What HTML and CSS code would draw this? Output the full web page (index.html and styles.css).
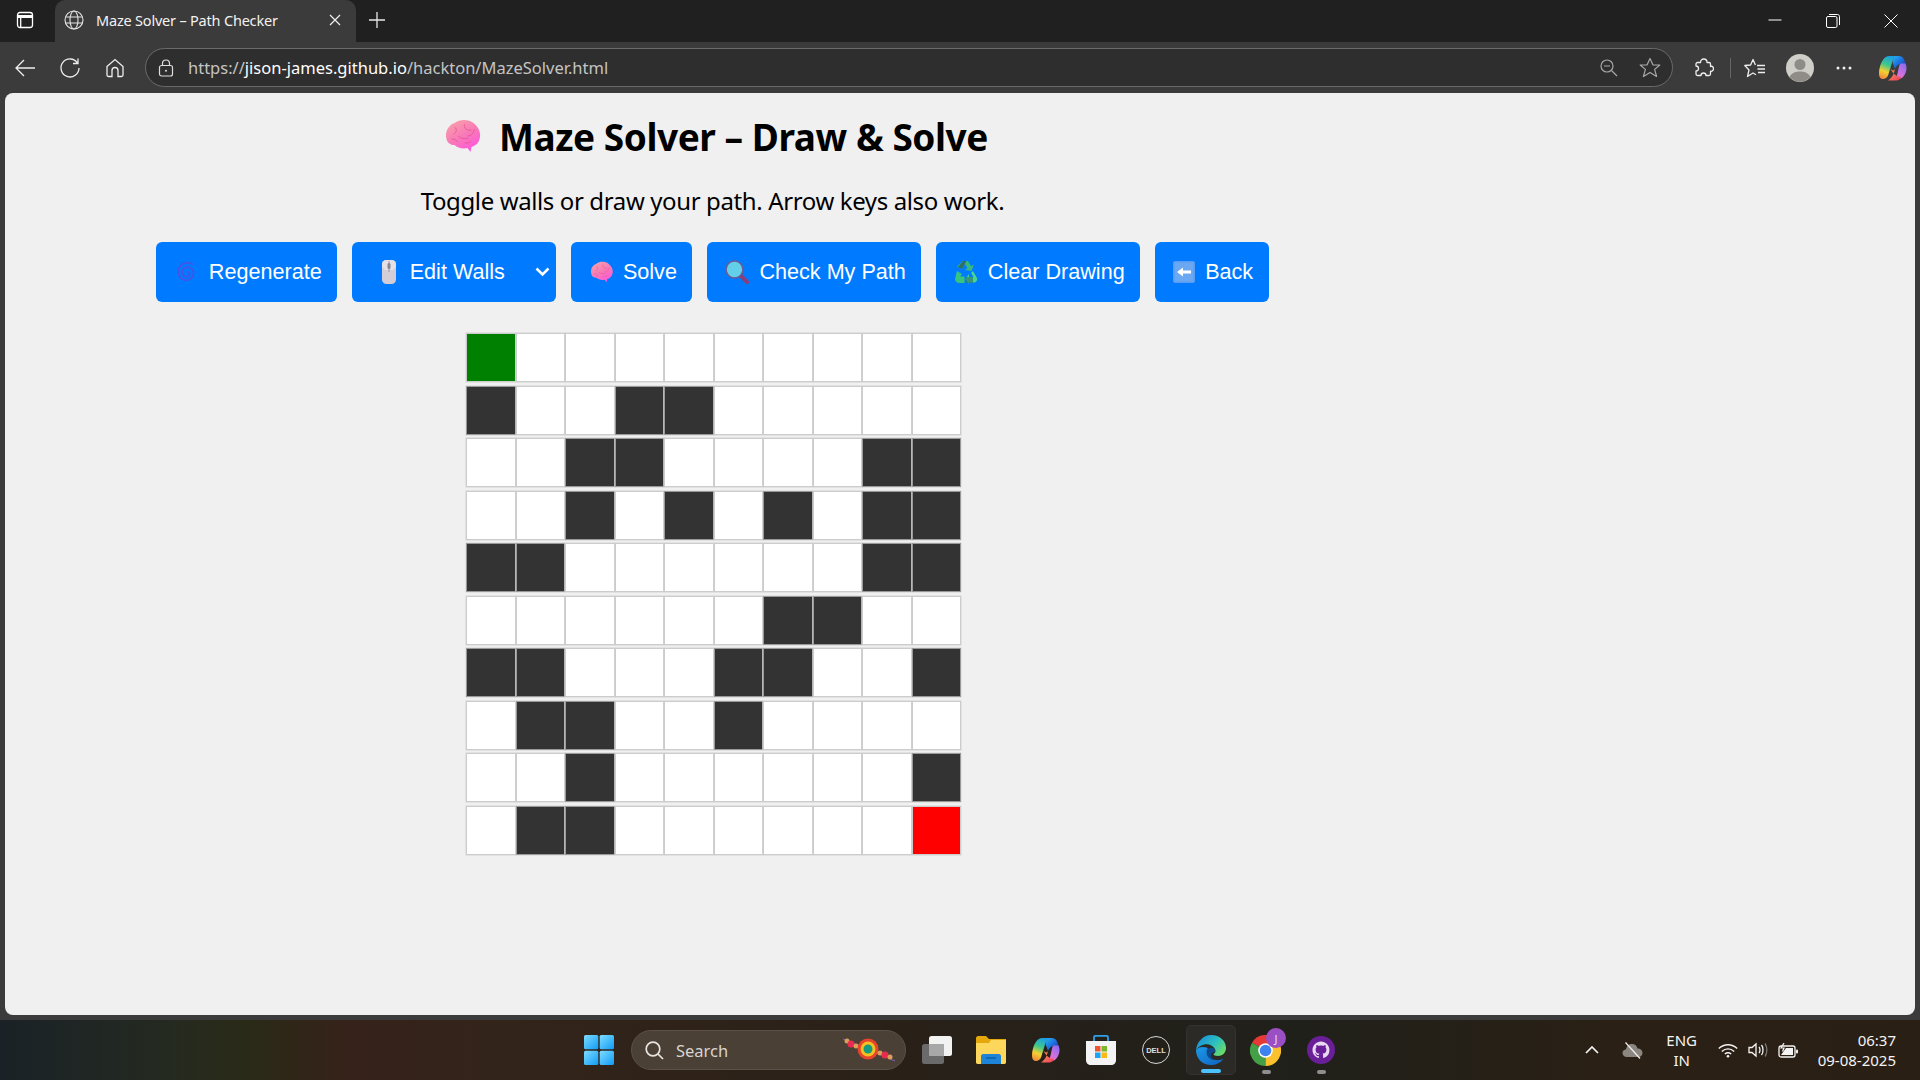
FILE: index.html
```html
<!DOCTYPE html>
<html lang="en">
<head>
    <meta charset="UTF-8">
    <meta name="viewport" content="width=device-width, initial-scale=1.0">
    <title>Maze Solver – Path Checker</title>
    <link rel="stylesheet" href="styles.css">
</head>
<body>
    <svg class="defs" width="0" height="0">
        <defs>
            <linearGradient id="brainFill" x1="0.1" y1="0" x2="0.7" y2="1">
                <stop offset="0" stop-color="#f9a3a8"/>
                <stop offset="0.55" stop-color="#f878b8"/>
                <stop offset="1" stop-color="#ff58dc"/>
            </linearGradient>
            <linearGradient id="copilotA" x1="0" y1="0" x2="1" y2="1">
                <stop offset="0" stop-color="#2bb5ef"/>
                <stop offset="0.5" stop-color="#1b6fe0"/>
                <stop offset="1" stop-color="#2a2aa0"/>
            </linearGradient>
            <linearGradient id="copilotB" x1="0.6" y1="0" x2="0.3" y2="1">
                <stop offset="0" stop-color="#1c9fe8"/>
                <stop offset="0.4" stop-color="#3fc88a"/>
                <stop offset="0.7" stop-color="#f4d030"/>
                <stop offset="1" stop-color="#f08a3c"/>
            </linearGradient>
            <linearGradient id="copilotC" x1="0.8" y1="0" x2="0.2" y2="1">
                <stop offset="0" stop-color="#8a6cf0"/>
                <stop offset="0.6" stop-color="#d070e0"/>
                <stop offset="1" stop-color="#f070b0"/>
            </linearGradient>
            <linearGradient id="copilotD" x1="0" y1="0" x2="1" y2="1">
                <stop offset="0" stop-color="#f8a050"/>
                <stop offset="1" stop-color="#f03c60"/>
            </linearGradient>
            <linearGradient id="edgeA" x1="0" y1="0.2" x2="1" y2="0.8">
                <stop offset="0" stop-color="#1a8fd8"/>
                <stop offset="0.55" stop-color="#2cc0c0"/>
                <stop offset="1" stop-color="#74e05c"/>
            </linearGradient>
            <linearGradient id="edgeB" x1="0" y1="0" x2="1" y2="1">
                <stop offset="0" stop-color="#1c9ae8"/>
                <stop offset="1" stop-color="#0f62c0"/>
            </linearGradient>
            <linearGradient id="winFill" x1="0" y1="0" x2="1" y2="1">
                <stop offset="0" stop-color="#7fdcff"/>
                <stop offset="1" stop-color="#0f9bf5"/>
            </linearGradient>
            <symbol id="brain" viewBox="0 0 36 34">
                <path d="M2 20C0 13 4 6 10 4 15 0 24 0 29 4 34 8 37 14 35 20 34 25 30 27 27 28L26 33 23 29C18 30 13 29 10 26 6 26 3 24 2 20Z" fill="url(#brainFill)"/>
                <path d="M10 8C13 10 12 14 9 15M20 5C19 9 22 12 27 11M30 10C29 14 27 17 23 17M14 17C16 20 21 20 24 19M7 20C10 20 12 21 13 23M27 22C25 24 22 24 20 24" fill="none" stroke="#e0578f" stroke-width="0.8"/>
            </symbol>
            <symbol id="copilot" viewBox="0 0 28 28">
                <path d="M16 2H20C23 2 25 4 26 8L26.500 10H22C19 10 17 12 16 15L13.500 8C14 4.500 15 2 16 2Z" fill="url(#copilotA)"/>
                <path d="M10 2H18C15.500 2 14.500 4 13.500 7L9.500 20C9 22.500 7 25 4 25C1.500 25 0 23 0 20C0 14 2 8 5 4.500C6.500 3 8 2 10 2Z" fill="url(#copilotB)"/>
                <path d="M22 9.500H26.500C28.500 14 27.500 19 24 23C22.500 24.500 21 25 19 25L15 25C17 24 18 22 18.500 19.500L20 12.500C20.500 10.500 21 9.500 22 9.500Z" fill="url(#copilotC)"/>
                <path d="M11 14C13 17 15 17 16 15C15 19 14 23 9 26.500H17C20 26.500 21 25 22 23C18 23 14 20 11 14Z" fill="url(#copilotD)"/>
            </symbol>
        </defs>
    </svg>

    <div class="titlebar">
        <svg class="tab-toggle" width="18" height="18" viewBox="0 0 18 18" fill="none" stroke="#fff" stroke-width="1.3">
            <rect x="1.5" y="1.5" width="15" height="15" rx="2.5"/>
            <path d="M1.5 5.5H16.5" stroke-width="3"/>
            <path d="M4.7 6V16"/>
        </svg>
        <div class="tab">
            <svg width="20" height="20" viewBox="0 0 20 20" fill="none" stroke="#e4e4e4" stroke-width="1.1">
                <circle cx="10" cy="10" r="9"/>
                <ellipse cx="10" cy="10" rx="4" ry="9"/>
                <path d="M1.6 7H18.4M1.6 13H18.4"/>
            </svg>
            <span class="tab-title">Maze Solver – Path Checker</span>
            <svg class="tab-close" width="12" height="12" viewBox="0 0 12 12" stroke="#f0f0f0" stroke-width="1.2">
                <path d="M1 1L11 11M11 1L1 11"/>
            </svg>
        </div>
        <svg class="new-tab" width="20" height="20" viewBox="0 0 20 20" stroke="#e8e8e8" stroke-width="1.3">
            <path d="M10 2V18M2 10H18"/>
        </svg>
        <div class="window-controls">
            <svg width="14" height="14" viewBox="0 0 14 14" stroke="#fff" stroke-width="1"><path d="M0.5 6H13.5"/></svg>
            <svg width="14" height="14" viewBox="0 0 14 14" fill="none" stroke="#fff" stroke-width="1">
                <rect x="0.5" y="2.5" width="10.5" height="11" rx="1.5"/>
                <path d="M3 0.5H11.5C12.6 0.5 13.5 1.4 13.5 2.5V11"/>
            </svg>
            <svg width="14" height="14" viewBox="0 0 14 14" stroke="#fff" stroke-width="1"><path d="M0.5 0.5L13.5 13.5M13.5 0.5L0.5 13.5"/></svg>
        </div>
    </div>

    <div class="toolbar">
        <svg class="tool-back" width="22" height="20" viewBox="0 0 22 20" fill="none" stroke="#eee" stroke-width="1.3">
            <path d="M21 10H2M10 2L2 10L10 18"/>
        </svg>
        <svg class="tool-reload" width="22" height="22" viewBox="0 0 22 22" fill="none" stroke="#eee" stroke-width="1.3">
            <path d="M18.5 6A9 9 0 1 0 20 11M19 1.5V6.5H14"/>
        </svg>
        <svg class="tool-home" width="20" height="20" viewBox="0 0 20 20" fill="none" stroke="#eee" stroke-width="1.3">
            <path d="M2 8.5L10 1.5L18 8.5V17A1.5 1.5 0 0 1 16.5 18.5H13V12.5A2.5 2.5 0 0 0 7 12.5V18.5H3.5A1.5 1.5 0 0 1 2 17Z"/>
        </svg>
        <div class="address">
            <svg width="16" height="18" viewBox="0 0 16 18" fill="none" stroke="#ddd" stroke-width="1.2">
                <rect x="1.5" y="6.5" width="13" height="10.5" rx="2"/>
                <path d="M4.5 6.5V4.5A3.5 3.5 0 0 1 11.5 4.5V6.5"/>
                <circle cx="8" cy="11.7" r="1" fill="#ddd" stroke="none"/>
            </svg>
            <span class="url"><span class="url-dim">https://</span>jison-james.github.io<span class="url-dim">/hackton/MazeSolver.html</span></span>
            <svg class="addr-zoom" width="18" height="18" viewBox="0 0 18 18" fill="none" stroke="#a8a8a8" stroke-width="1.2">
                <circle cx="7" cy="7" r="6"/>
                <path d="M4 7H10M11.5 11.5L17 17"/>
            </svg>
            <svg class="addr-star" width="22" height="21" viewBox="0 0 22 21" fill="none" stroke="#a8a8a8" stroke-width="1.2">
                <path d="M11 1.5L14 8H20.8L15.6 12.4L17.6 19.5L11 15.4L4.4 19.5L6.4 12.4L1.2 8H8Z" stroke-linejoin="round"/>
            </svg>
        </div>
        <svg class="tool-ext" width="20" height="20" viewBox="0 0 20 20" fill="none" stroke="#eee" stroke-width="1.3" stroke-linejoin="round">
            <path d="M6.500 4.500C6.500 2.500 8 1 9.800 1C11.600 1 13 2.500 13 4.500H15C16 4.500 16.500 5.200 16.500 6V8.500C18.500 7.500 19.500 9.500 19.500 10.800C19.500 12.300 18 13.800 16.500 13.200V16C16.500 17 15.700 17.500 15 17.500H12C12 16 11 15 9.500 15C8 15 7 16 7 17.500H3.500C2.800 17.500 2 17 2 16V13C3.500 13 4.500 12 4.500 10.500C4.500 9 3.500 8 2 8V6C2 5 2.800 4.500 3.500 4.500Z"/>
        </svg>
        <span class="tool-sep"></span>
        <svg class="tool-fav" width="22" height="20" viewBox="0 0 22 20" fill="none" stroke="#eee" stroke-width="1.3" stroke-linejoin="round">
            <path d="M11.400 7L9 1.500L6.600 7L0.800 7.500L5 12L3.500 18.500L9 15L12 16.700"/>
            <path d="M13 7.500H21M13.500 11H21M14 14.500H21"/>
        </svg>
        <svg class="tool-avatar" width="28" height="28" viewBox="0 0 28 28">
            <circle cx="14" cy="14" r="14" fill="#d0cec8"/>
            <circle cx="14" cy="10.500" r="5.500" fill="#8f8c88"/>
            <path d="M3.500 23C6 18.500 10 17.500 14 17.500S22 18.500 24.500 23A14 14 0 0 1 3.500 23Z" fill="#8f8c88"/>
        </svg>
        <svg class="tool-more" width="16" height="4" viewBox="0 0 16 4" fill="#eee">
            <circle cx="2" cy="2" r="1.500"/><circle cx="8" cy="2" r="1.500"/><circle cx="14" cy="2" r="1.500"/>
        </svg>
        <svg class="tool-copilot" width="28" height="28"><use href="#copilot"/></svg>
    </div>

    <main class="page">
        <div class="content">
            <h1 class="page-title">
                <svg class="title-brain" width="37" height="34"><use href="#brain"/></svg>
                Maze Solver – Draw &amp; Solve
            </h1>
            <p class="hint">Toggle walls or draw your path. Arrow keys also work.</p>

            <div class="controls">
                <button class="btn">
                    <svg width="24" height="24" viewBox="0 0 24 24" fill="none" stroke="#4a52e4" stroke-width="1.600">
                        <path d="M12 12.500C13 11 15 12.500 14.500 14.500C14 17 10.500 17.500 8.500 15.500C6 13 7 8.500 10.500 7.500C15 6 19 9.500 18.500 14C18 19 12.500 21.500 8 19.500C3 17 2 10.500 5 6.500C8 2.500 14 1.500 18 4.500"/>
                    </svg>
                    Regenerate
                </button>
                <button class="btn btn-select">
                    <svg class="icon-mouse" width="14" height="24" viewBox="0 0 14 24">
                        <rect x="0" y="0" width="14" height="24" rx="4.500" fill="#d3cdd8"/>
                        <rect x="0" y="0" width="14" height="10" rx="4.500" fill="#e4e0e6"/>
                        <path d="M7 1V12" stroke="#9a96a2" stroke-width="1"/>
                        <rect x="5.500" y="3" width="3" height="6" rx="1.500" fill="#8a8692"/>
                    </svg>
                    Edit Walls
                    <svg class="chevron" width="15" height="10" viewBox="0 0 15 10" fill="none" stroke="#fff" stroke-width="2.600">
                        <path d="M1.500 1.500L7.500 7.500L13.500 1.500"/>
                    </svg>
                </button>
                <button class="btn">
                    <svg width="23" height="22"><use href="#brain"/></svg>
                    Solve
                </button>
                <button class="btn btn-tight">
                    <svg width="24" height="24" viewBox="0 0 24 24">
                        <path d="M15 15L22 22" stroke="#8a3f78" stroke-width="4" stroke-linecap="round"/>
                        <circle cx="9.500" cy="9.500" r="8.500" fill="#63d0ea" stroke="#6c5a94" stroke-width="1.600"/>
                    </svg>
                    Check My Path
                </button>
                <button class="btn btn-tight">
                    <svg width="24" height="24" viewBox="0 0 24 24">
                        <path d="M9 1H14L17 6L20 4.500L17.500 11L11 10L13.500 8L11 4L8 9L3 6.500Z" fill="#37b97f"/>
                        <path d="M9 1H12.500L8 9L4 7Z" fill="#2f6f68"/>
                        <path d="M3 11L8 14L6 16.500H10.500V23H5C3 23 1 21 1 19Z" fill="#36c47f"/>
                        <path d="M19 11L23 18C24 20 22 22.500 20 22.500H15V24L11.500 19L15 14V17H19.500L17 13Z" fill="#4ad490"/>
                        <path d="M12 17H19V23H12Z" fill="#2f7f6e" opacity="0.7"/>
                    </svg>
                    Clear Drawing
                </button>
                <button class="btn">
                    <svg width="22" height="24" viewBox="0 0 22 24">
                        <rect x="0" y="1" width="22" height="22" rx="2" fill="#5c9cf0"/>
                        <rect x="1.500" y="2.500" width="19" height="19" rx="1" fill="#6aa8f4"/>
                        <path d="M4 12L10 7.500V10.500H18V13.500H10V16.500Z" fill="#fff"/>
                    </svg>
                    Back
                </button>
            </div>

            <div class="maze">
                <div class="cell start"></div><div class="cell"></div><div class="cell"></div><div class="cell"></div><div class="cell"></div><div class="cell"></div><div class="cell"></div><div class="cell"></div><div class="cell"></div><div class="cell"></div>
                <div class="cell wall"></div><div class="cell"></div><div class="cell"></div><div class="cell wall"></div><div class="cell wall"></div><div class="cell"></div><div class="cell"></div><div class="cell"></div><div class="cell"></div><div class="cell"></div>
                <div class="cell"></div><div class="cell"></div><div class="cell wall"></div><div class="cell wall"></div><div class="cell"></div><div class="cell"></div><div class="cell"></div><div class="cell"></div><div class="cell wall"></div><div class="cell wall"></div>
                <div class="cell"></div><div class="cell"></div><div class="cell wall"></div><div class="cell"></div><div class="cell wall"></div><div class="cell"></div><div class="cell wall"></div><div class="cell"></div><div class="cell wall"></div><div class="cell wall"></div>
                <div class="cell wall"></div><div class="cell wall"></div><div class="cell"></div><div class="cell"></div><div class="cell"></div><div class="cell"></div><div class="cell"></div><div class="cell"></div><div class="cell wall"></div><div class="cell wall"></div>
                <div class="cell"></div><div class="cell"></div><div class="cell"></div><div class="cell"></div><div class="cell"></div><div class="cell"></div><div class="cell wall"></div><div class="cell wall"></div><div class="cell"></div><div class="cell"></div>
                <div class="cell wall"></div><div class="cell wall"></div><div class="cell"></div><div class="cell"></div><div class="cell"></div><div class="cell wall"></div><div class="cell wall"></div><div class="cell"></div><div class="cell"></div><div class="cell wall"></div>
                <div class="cell"></div><div class="cell wall"></div><div class="cell wall"></div><div class="cell"></div><div class="cell"></div><div class="cell wall"></div><div class="cell"></div><div class="cell"></div><div class="cell"></div><div class="cell"></div>
                <div class="cell"></div><div class="cell"></div><div class="cell wall"></div><div class="cell"></div><div class="cell"></div><div class="cell"></div><div class="cell"></div><div class="cell"></div><div class="cell"></div><div class="cell wall"></div>
                <div class="cell"></div><div class="cell wall"></div><div class="cell wall"></div><div class="cell"></div><div class="cell"></div><div class="cell"></div><div class="cell"></div><div class="cell"></div><div class="cell"></div><div class="cell end"></div>
            </div>
        </div>
    </main>

    <footer class="taskbar">
        <div class="task-center">
            <svg class="task-win" width="30" height="30" viewBox="0 0 30 30" fill="url(#winFill)">
                <rect x="0" y="0" width="14.300" height="14.300" rx="1.500"/>
                <rect x="15.700" y="0" width="14.300" height="14.300" rx="1.500"/>
                <rect x="0" y="15.700" width="14.300" height="14.300" rx="1.500"/>
                <rect x="15.700" y="15.700" width="14.300" height="14.300" rx="1.500"/>
            </svg>
            <div class="search">
                <svg width="19" height="19" viewBox="0 0 19 19" fill="none" stroke="#e8e4e0" stroke-width="1.700">
                    <circle cx="8" cy="8" r="6.800"/>
                    <path d="M13 13L18 18"/>
                </svg>
                <span class="search-text">Search</span>
                <svg class="rakhi" width="54" height="24" viewBox="0 0 54 24">
                    <path d="M1 1L53 23" stroke="#8060c0" stroke-width="1"/>
                    <circle cx="5" cy="3" r="2.500" fill="#d8a058"/>
                    <circle cx="9" cy="6" r="3.500" fill="#ea2b50"/>
                    <circle cx="14" cy="8" r="2.500" fill="#d8a058"/>
                    <circle cx="26" cy="11" r="10.500" fill="#e8432c"/>
                    <circle cx="26" cy="11" r="7.500" fill="#f4c020"/>
                    <circle cx="26" cy="11" r="4.500" fill="#189a80"/>
                    <circle cx="38" cy="15" r="2.500" fill="#d8a058"/>
                    <circle cx="43" cy="17" r="3.500" fill="#ea2b50"/>
                    <circle cx="48" cy="19" r="2.500" fill="#d8a058"/>
                </svg>
            </div>
            <svg class="task-view" width="30" height="28" viewBox="0 0 30 28">
                <rect x="0" y="8" width="22" height="20" rx="2.500" fill="#6a6a6a"/>
                <rect x="7" y="0" width="23" height="20" rx="2.500" fill="#f2f2f2"/>
                <path d="M7 8H22V20H9C8 20 7 19 7 18Z" fill="#a8a8a8"/>
            </svg>
            <svg class="task-folder" width="30" height="28" viewBox="0 0 30 28">
                <path d="M0 2C0 1 1 0 2 0H10L13 3H30V26C30 27 29 28 28 28H2C1 28 0 27 0 26Z" fill="#e4a80c"/>
                <path d="M0 7H13L15 4H30V26C30 27 29 28 28 28H2C1 28 0 27 0 26Z" fill="#fdd75c"/>
                <path d="M5 20C5 19 6 18 7 18H23C24 18 25 19 25 20V28H5Z" fill="#1d84d8"/>
                <path d="M10 22H20" stroke="#0c5ea8" stroke-width="1.500"/>
            </svg>
            <svg class="task-copilot" width="28" height="28"><use href="#copilot"/></svg>
            <svg class="task-store" width="30" height="30" viewBox="0 0 30 30">
                <path d="M8 6V2C8 1 9 0.800 10 0.800H20C21 0.800 22 1 22 2V6" fill="none" stroke="#2ea0e8" stroke-width="1.800"/>
                <path d="M0 6H30V25C30 28 28 30 25 30H5C2 30 0 28 0 25Z" fill="#f4f4f4"/>
                <rect x="9" y="11" width="5.500" height="5.500" fill="#f0562c"/>
                <rect x="15.500" y="11" width="5.500" height="5.500" fill="#7cb62c"/>
                <rect x="9" y="17.500" width="5.500" height="5.500" fill="#1fa4ef"/>
                <rect x="15.500" y="17.500" width="5.500" height="5.500" fill="#fcb814"/>
            </svg>
            <div class="task-dell"><span>DELL</span></div>
            <div class="task-edge">
                <svg width="30" height="30" viewBox="0 0 30 30">
                    <path d="M0 15C0 24 7 30 15 30C20 30 24 28 27.500 24C24 25.500 19 25.500 15.500 24C11 22 9.500 16 12 13C7 11 2 12 0 15Z" fill="url(#edgeB)"/>
                    <path d="M11.500 14C9 19 12 24 18 25C14 22 14 18 18 17C21 16.500 18 10 11.500 14Z" fill="#0c4a90"/>
                    <path d="M0 15C1 6 8 0 15 0C24 0 30 6 30 13C30 18 26 21 22 21C19 21 17.500 20 17.500 19C19.500 18 20 16 19 14C17 10 12 8.500 8 9.500C4 10.500 1.500 12.500 0 15Z" fill="url(#edgeA)"/>
                </svg>
                <span class="task-mark active"></span>
            </div>
            <div class="task-chrome">
                <svg width="31" height="31" viewBox="0 0 32 32">
                    <path d="M16 16L2.100 8A16 16 0 0 1 29.900 8Z" fill="#e53935"/>
                    <path d="M16 16L2.100 8A16 16 0 0 0 16 32Z" fill="#43a047"/>
                    <path d="M16 16L29.900 8A16 16 0 0 1 16 32Z" fill="#fbc02d"/>
                    <circle cx="16" cy="16" r="7.500" fill="#fff"/>
                    <circle cx="16" cy="16" r="6" fill="#3d82ee"/>
                </svg>
                <span class="badge">J</span>
                <span class="task-mark"></span>
            </div>
            <div class="task-github">
                <svg width="28" height="28" viewBox="0 0 28 28">
                    <circle cx="14" cy="14" r="14" fill="#6a1f98"/>
                    <g transform="translate(5.500 5.500) scale(1.060)">
                        <path fill="#e8d8f0" d="M8 0C3.580 0 0 3.580 0 8c0 3.540 2.290 6.530 5.470 7.590.4.070.55-.17.55-.38 0-.19-.01-.82-.01-1.490-2.010.37-2.530-.49-2.690-.94-.09-.23-.48-.94-.82-1.130-.28-.15-.68-.52-.01-.53.63-.01 1.080.58 1.230.82.720 1.210 1.870.87 2.330.66.070-.52.280-.87.510-1.070-1.780-.2-3.640-.89-3.640-3.950 0-.87.310-1.590.820-2.150-.080-.2-.360-1.020.080-2.120 0 0 .670-.210 2.200.820.640-.180 1.320-.270 2-.270s1.360.090 2 .270c1.530-1.040 2.200-.820 2.200-.820.440 1.100.160 1.920.080 2.120.510.560.820 1.270.820 2.150 0 3.070-1.870 3.750-3.650 3.950.290.250.540.730.540 1.480 0 1.070-.010 1.930-.010 2.200 0 .210.150.460.550.380A8.010 8.010 0 0 0 16 8c0-4.420-3.580-8-8-8z"/>
                    </g>
                </svg>
                <span class="task-mark"></span>
            </div>
        </div>
        <div class="tray">
            <svg class="tray-chevron" width="14" height="8" viewBox="0 0 14 8" fill="none" stroke="#f4f4f4" stroke-width="1.700">
                <path d="M1 7L7 1L13 7"/>
            </svg>
            <svg class="tray-cloud" width="21" height="17" viewBox="0 0 21 17">
                <path d="M5 15C2 15 0.500 13 0.500 11C0.500 9 2 7.500 4 7.500C4.500 4 7 2 10 2C13 2 15 4 15.500 6.500C18.500 6.500 20.500 8.500 20.500 11C20.500 13 19 15 16 15Z" fill="#8c8680"/>
                <path d="M3.500 0.500L18 16.500" stroke="#f0f0f0" stroke-width="1.200"/>
            </svg>
            <div class="lang"><span>ENG</span><span>IN</span></div>
            <svg class="tray-wifi" width="20" height="15" viewBox="0 0 20 15" fill="none" stroke="#f4f4f4" stroke-width="1.400">
                <path d="M0.800 5.500C6 0.500 14 0.500 19.200 5.500M3.800 8.500C7.500 5 12.500 5 16.200 8.500M6.800 11C8.700 9.500 11.300 9.500 13.200 11"/>
                <circle cx="10" cy="13.300" r="1.300" fill="#f4f4f4" stroke="none"/>
            </svg>
            <svg class="tray-sound" width="20" height="16" viewBox="0 0 20 16" fill="none" stroke="#f4f4f4" stroke-width="1.300">
                <path d="M1 5.500H4L8 2V14L4 10.500H1Z"/>
                <path d="M11 5C12.300 6.500 12.300 9.500 11 11M13.500 3C15.500 5.500 15.500 10.500 13.500 13"/>
                <path d="M17 1.500C19.500 5 19.500 11 17 14.500" stroke="#777"/>
            </svg>
            <svg class="tray-battery" width="20" height="15" viewBox="0 0 20 15">
                <rect x="1" y="3" width="16" height="11" rx="2" fill="none" stroke="#f4f4f4" stroke-width="1.300"/>
                <path d="M3 12L8 5H15V12Z" fill="#f4f4f4"/>
                <rect x="18" y="6.500" width="2" height="4" rx="1" fill="#f4f4f4"/>
                <path d="M6 0L3 5H6L4.500 8.500" fill="none" stroke="#f4f4f4" stroke-width="1.200"/>
            </svg>
            <div class="clock"><span>06:37</span><span>09-08-2025</span></div>
        </div>
    </footer>
</body>
</html>
```

FILE: styles.css
```css
* {
    box-sizing: border-box;
}
html, body {
    height: 100%;
}
body {
    margin: 0;
    width: 1920px;
    height: 1080px;
    overflow: hidden;
    display: flex;
    flex-direction: column;
    background-color: #3b3b3b;
    font-family: "Noto Sans", sans-serif;
    color: #fff;
}
svg {
    display: block;
    flex: none;
}
.defs {
    position: absolute;
}

/* browser chrome */
.titlebar {
    height: 42px;
    flex: none;
    display: flex;
    align-items: center;
    background-color: #202020;
    padding: 0 0 2px 16px;
}
.tab {
    margin: 0 0 -2px 21px;
    width: 301px;
    height: 42px;
    display: flex;
    align-items: center;
    padding: 0 15px 3px 9px;
    background-color: #3b3b3b;
    border-radius: 10px 10px 0 0;
}
.tab-title {
    margin-left: 12px;
    font-size: 14.5px;
    letter-spacing: -0.2px;
    color: #f2f2f2;
    white-space: nowrap;
}
.tab-close {
    margin-left: auto;
}
.new-tab {
    margin-left: 11px;
}
.window-controls {
    margin: 2px 0 0 auto;
    display: flex;
    gap: 44px;
    padding-right: 22px;
}
.toolbar {
    height: 51px;
    flex: none;
    display: flex;
    align-items: center;
    background-color: #3b3b3b;
    padding-left: 14px;
}
.tool-reload {
    margin-left: 23px;
}
.tool-home {
    margin-left: 24px;
}
.address {
    margin-left: 20px;
    width: 1528px;
    height: 39px;
    display: flex;
    align-items: center;
    padding: 0 11px 0 12px;
    background-color: #2e2e2e;
    border: 1px solid #6a6a6a;
    border-radius: 20px;
}
.url {
    margin-left: 14px;
    font-size: 16.5px;
    letter-spacing: 0;
    color: #fff;
}
.url-dim {
    color: #c4c4c4;
}
.addr-zoom {
    margin-left: auto;
}
.addr-star {
    margin-left: 21px;
}
.tool-ext {
    margin-left: 21px;
}
.tool-sep {
    margin-left: 16px;
    width: 1px;
    height: 20px;
    background-color: #666;
}
.tool-fav {
    margin-left: 13px;
}
.tool-avatar {
    margin-left: 20px;
}
.tool-more {
    margin-left: 22px;
}
.tool-copilot {
    margin-left: 27px;
}

/* page */
.page {
    margin: 0 5px;
    height: 922px;
    flex: none;
    background-color: #f0f0f0;
    border-radius: 8px;
    color: #000;
}
.content {
    width: 1415px;
    display: flex;
    flex-direction: column;
    align-items: center;
}
.page-title {
    margin: 18px 0 0 7px;
    height: 50px;
    display: flex;
    align-items: center;
    gap: 18px;
    font-size: 37px;
    font-weight: 700;
    letter-spacing: -0.45px;
    white-space: nowrap;
}
.hint {
    margin: 24px 0 0;
    height: 32px;
    line-height: 32px;
    font-size: 24px;
    letter-spacing: -0.38px;
}
.controls {
    margin-top: 25px;
    display: flex;
    gap: 15px;
}
.btn {
    height: 60px;
    display: flex;
    align-items: center;
    gap: 10px;
    padding: 0 15.5px 0 18.5px;
    border: none;
    border-radius: 6px;
    background-color: #007bff;
    color: #fff;
    font-family: "Liberation Sans", Arial, sans-serif;
    font-size: 21.6px;
    cursor: pointer;
}
.btn-select {
    padding-left: 29.5px;
}
.btn-tight {
    padding-left: 18px;
    padding-right: 15px;
}
.icon-mouse {
    margin-right: 4px;
}
.chevron {
    margin-left: 20px;
    margin-right: -9px;
}
.maze {
    margin: 31px 0 0 2px;
    display: grid;
    grid-template-columns: repeat(10, 49.5px);
    grid-auto-rows: 49px;
    row-gap: 3.5px;
}
.cell {
    background-color: #fff;
    border: 1px solid #ccc;
    box-shadow: 0 0 0 0.5px #d4d4d4;
}
.wall {
    background-color: #333;
    border-color: #999;
}
.start {
    background-color: #008000;
}
.end {
    background-color: #f00;
}

/* taskbar */
.taskbar {
    margin-top: 5px;
    height: 60px;
    flex: none;
    position: relative;
    display: flex;
    align-items: center;
    background: linear-gradient(90deg, #1a2227 0%, #252a20 9%, #2a2a17 13%, #36221a 18%, #33241a 26%, #2a2118 45%, #23201a 60%, #20201a 68%, #2b2015 85%, #2a1f14 100%);
}
.task-center {
    margin-left: 584px;
    display: flex;
    align-items: center;
}
.search {
    margin-left: 17px;
    width: 275px;
    height: 40px;
    display: flex;
    align-items: center;
    padding-left: 13px;
    background-color: #4b4036;
    border: 1px solid #5c5146;
    border-radius: 20px;
}
.search-text {
    margin-left: 12px;
    font-size: 16.5px;
    color: #d8d4d0;
}
.rakhi {
    margin-left: auto;
    margin-right: 9px;
}
.task-view {
    margin-left: 16px;
}
.task-folder {
    margin-left: 24px;
}
.task-copilot {
    margin-left: 26px;
}
.task-store {
    margin-left: 26px;
}
.task-dell {
    margin-left: 26px;
    width: 28px;
    height: 28px;
    display: flex;
    align-items: center;
    justify-content: center;
    border: 1.5px solid #d8d8d8;
    border-radius: 50%;
    font-family: "Liberation Sans", Arial, sans-serif;
    font-size: 7.5px;
    font-weight: 700;
    color: #e0e0e0;
}
.task-edge {
    margin-left: 16px;
    width: 50px;
    height: 50px;
    position: relative;
    display: flex;
    align-items: center;
    justify-content: center;
    background-color: #2b2a26;
    border: 1px solid #33322e;
    border-radius: 5px;
}
.task-mark {
    position: absolute;
    bottom: 1px;
    left: 50%;
    width: 9px;
    height: 4px;
    margin-left: -4.5px;
    background-color: #8e8e8e;
    border-radius: 2px;
}
.task-mark.active {
    width: 20px;
    margin-left: -10px;
    background-color: #4cc2ff;
}
.task-chrome {
    margin-left: 14px;
    width: 31px;
    height: 50px;
    position: relative;
    display: flex;
    align-items: center;
}
.badge {
    position: absolute;
    top: 3px;
    left: 16px;
    width: 20px;
    height: 20px;
    display: flex;
    align-items: center;
    justify-content: center;
    background-color: #9a4fc4;
    border-radius: 50%;
    font-size: 11px;
    color: #eadcf2;
}
.task-chrome .task-mark {
    left: 16px;
}
.task-github {
    margin-left: 26px;
    width: 28px;
    height: 50px;
    position: relative;
    display: flex;
    align-items: center;
}
.tray {
    margin-left: auto;
    display: flex;
    align-items: center;
    padding-right: 24px;
}
.tray-cloud {
    margin-left: 23px;
}
.lang {
    margin-left: 20.5px;
    width: 36px;
    display: flex;
    flex-direction: column;
    align-items: center;
    font-size: 15px;
    line-height: 20px;
    color: #f4f4f4;
}
.tray-wifi {
    margin-left: 18px;
}
.tray-sound {
    margin-left: 10px;
}
.tray-battery {
    margin-left: 10px;
}
.clock {
    margin-left: 20px;
    display: flex;
    flex-direction: column;
    align-items: flex-end;
    font-size: 15px;
    line-height: 20px;
    color: #f4f4f4;
}
```
